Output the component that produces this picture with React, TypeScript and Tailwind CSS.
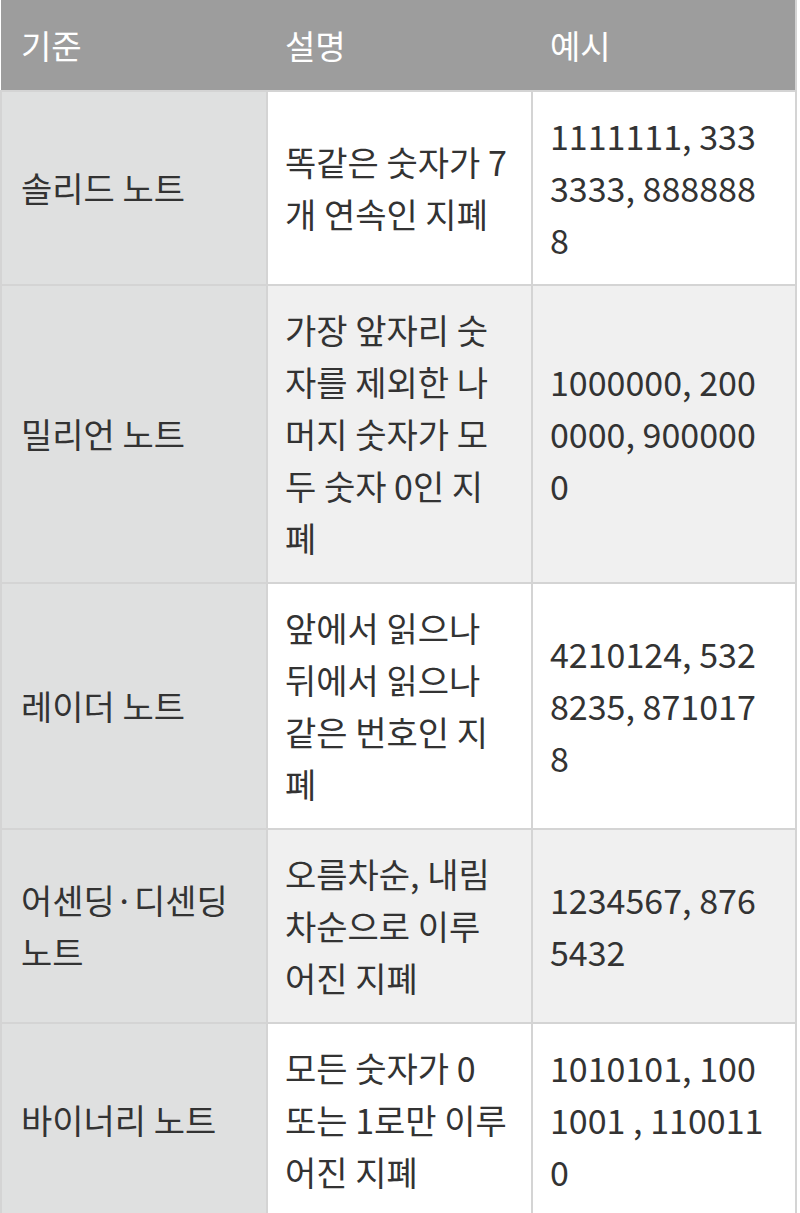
import React from "react";

const rows: { a: string[]; b: string[]; c: string[] }[] = [
  {
    a: ["솔리드 노트"],
    b: ["똑같은 숫자가 7", "개 연속인 지폐"],
    c: ["1111111, 333", "3333, 888888", "8"],
  },
  {
    a: ["밀리언 노트"],
    b: ["가장 앞자리 숫", "자를 제외한 나", "머지 숫자가 모", "두 숫자 0인 지", "폐"],
    c: ["1000000, 200", "0000, 900000", "0"],
  },
  {
    a: ["레이더 노트"],
    b: ["앞에서 읽으나", "뒤에서 읽으나", "같은 번호인 지", "폐"],
    c: ["4210124, 532", "8235, 871017", "8"],
  },
  {
    a: ["어센딩·디센딩", "노트"],
    b: ["오름차순, 내림", "차순으로 이루", "어진 지폐"],
    c: ["1234567, 876", "5432"],
  },
  {
    a: ["바이너리 노트"],
    b: ["모든 숫자가 0", "또는 1로만 이루", "어진 지폐"],
    c: ["1010101, 100", "1001 , 110011", "0"],
  },
];

function Lines({ lines }: { lines: string[] }) {
  return (
    <>
      {lines.map((l, i) => (
        <div key={i} className="whitespace-nowrap">
          {l}
        </div>
      ))}
    </>
  );
}

export default function App() {
  return (
    <div
      className="w-[800px] h-[1213px] overflow-hidden bg-white text-[#333333]"
      style={{ fontFamily: '"Noto Sans CJK KR", "Noto Sans", sans-serif' }}
    >
      <table className="table-fixed border-collapse w-[795px] text-[34px] leading-[52px]">
        <colgroup>
          <col className="w-[266px]" />
          <col className="w-[265px]" />
          <col className="w-[264px]" />
        </colgroup>
        <thead>
          <tr className="bg-[#9d9d9d] text-white">
            <th className="text-left font-normal text-[33px] leading-[50px] px-[20px] py-[20px] border-b-2 border-[#d4d4d4]">기준</th>
            <th className="text-left font-normal text-[33px] leading-[50px] px-[18px] py-[20px] border-b-2 border-[#d4d4d4]">설명</th>
            <th className="text-left font-normal text-[33px] leading-[50px] px-[18px] py-[20px] border-b-2 border-r-2 border-[#d4d4d4]">예시</th>
          </tr>
        </thead>
        <tbody>
          {rows.map((r, i) => {
            const alt = i % 2 === 1;
            return (
              <tr key={i}>
                <td className="bg-[#dfe0e0] border-2 border-[#d4d4d4] px-[19px] py-[18px] align-middle">
                  <Lines lines={r.a} />
                </td>
                <td
                  className={`${alt ? "bg-[#f0f0f0]" : "bg-white"} border-2 border-[#d4d4d4] px-[17px] py-[18px] align-middle`}
                >
                  <Lines lines={r.b} />
                </td>
                <td
                  className={`${alt ? "bg-[#f0f0f0]" : "bg-white"} border-2 border-[#d4d4d4] px-[17px] py-[18px] align-middle`}
                >
                  <Lines lines={r.c} />
                </td>
              </tr>
            );
          })}
        </tbody>
      </table>
    </div>
  );
}
